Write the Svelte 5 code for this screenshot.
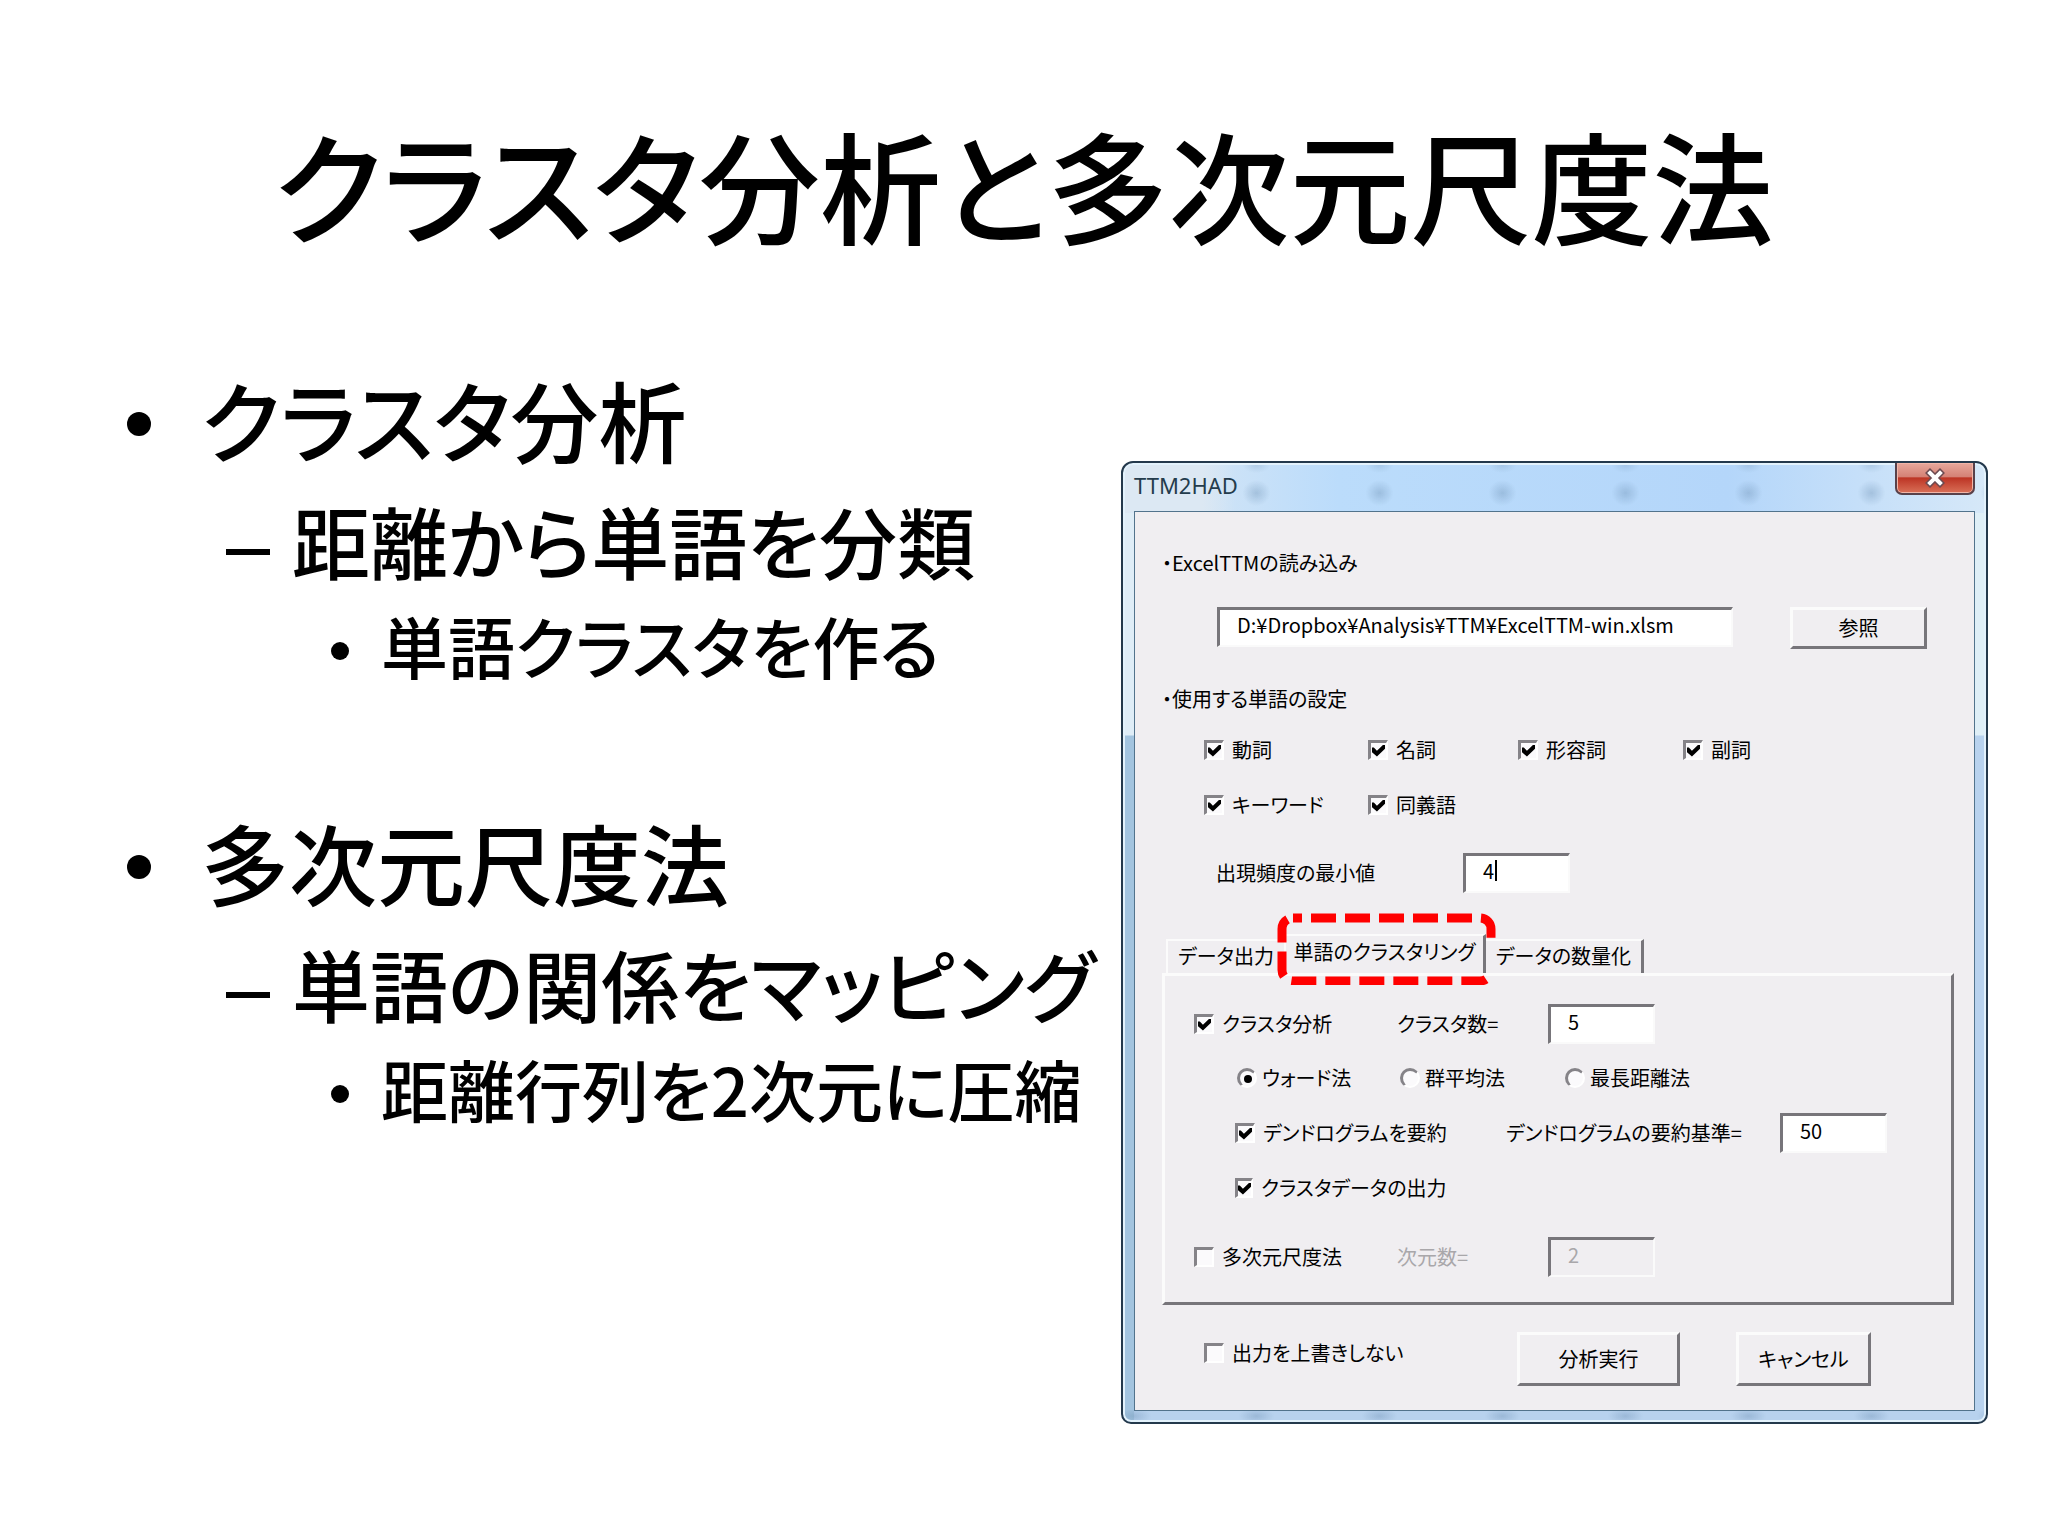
<script>
  const outline = [
    {
      title: 'クラスタ分析',
      child: '距離から単語を分類',
      detail: '単語クラスタを作る'
    },
    {
      title: '多次元尺度法',
      child: '単語の関係をマッピング',
      detail: '距離行列を2次元に圧縮'
    }
  ];

  const tabs = ['データ出力', '単語のクラスタリング', 'データの数量化'];
  const methods = ['ウォード法', '群平均法', '最長距離法'];

  let words = [
    { name: '動詞', checked: true },
    { name: '名詞', checked: true },
    { name: '形容詞', checked: true },
    { name: '副詞', checked: true },
    { name: 'キーワード', checked: true },
    { name: '同義語', checked: true }
  ];

  let path = 'D:¥Dropbox¥Analysis¥TTM¥ExcelTTM-win.xlsm';
  let minCount = '4';
  let activeTab = 1;
  let cluster = true;
  let clusterCount = '5';
  let method = 'ウォード法';
  let summarize = true;
  let threshold = '50';
  let outputData = true;
  let mds = false;
  let dimensions = '2';
  let keepOutput = false;
</script>

<main class="slide">
  <h1>クラスタ分析と多次元尺度法</h1>

  <div class="content">
    <ul class="outline">
      {#each outline as item}
        <li>
          <div class="line level1"><span class="dot"></span>{item.title}</div>
          <ul>
            <li>
              <div class="line level2"><span class="dash"></span>{item.child}</div>
              <ul>
                <li class="line level3"><span class="dot"></span>{item.detail}</li>
              </ul>
            </li>
          </ul>
        </li>
      {/each}
    </ul>

    <section class="dialog" aria-label="TTM2HAD">
      <header class="titlebar">
        <span>TTM2HAD</span>
        <button class="close" aria-label="閉じる">
          <svg width="22" height="20" viewBox="0 0 22 20" fill="none">
            <path d="M6 5l10 10M16 5L6 15" stroke="#6b4a50" stroke-width="7" stroke-linecap="square" />
            <path d="M6 5l10 10M16 5L6 15" stroke="#fff" stroke-width="4" stroke-linecap="square" />
          </svg>
        </button>
      </header>

      <form class="client" on:submit|preventDefault>
        <label class="caption" for="path">・ExcelTTMの読み込み</label>
        <div class="path-row">
          <input id="path" class="field" type="text" bind:value={path} />
          <button class="btn" type="button">参照</button>
        </div>

        <div class="caption second">・使用する単語の設定</div>
        <div class="words">
          {#each words as word}
            <label class="option"><input type="checkbox" bind:checked={word.checked} />{word.name}</label>
          {/each}
        </div>

        <div class="min-row">
          <label for="min">出現頻度の最小値</label>
          <div class="caret-field">
            <input id="min" class="field" type="text" bind:value={minCount} />
            <span class="caret"></span>
          </div>
        </div>

        <div class="tabs" role="tablist">
          {#each tabs as tab, i}
            <button
              class="tab"
              class:active={activeTab === i}
              type="button"
              role="tab"
              aria-selected={activeTab === i}
              on:click={() => (activeTab = i)}
            >
              {tab}
              {#if i === 1}
                <svg class="marker" viewBox="0 0 220 72">
                  <rect x="5" y="5" width="209" height="63" rx="11" fill="none" stroke="#f00" stroke-width="9" stroke-dasharray="25 9" stroke-dashoffset="16" />
                </svg>
              {/if}
            </button>
          {/each}
        </div>

        <div class="panel">
          <div class="row">
            <label class="option"><input type="checkbox" bind:checked={cluster} />クラスタ分析</label>
            <label for="count">クラスタ数=</label>
            <input id="count" class="field" type="text" bind:value={clusterCount} />
          </div>
          <div class="methods">
            {#each methods as name}
              <label class="option"><input type="radio" name="method" value={name} bind:group={method} />{name}</label>
            {/each}
          </div>
          <div class="row summary">
            <label class="option"><input type="checkbox" bind:checked={summarize} />デンドログラムを要約</label>
            <label for="threshold">デンドログラムの要約基準=</label>
            <input id="threshold" class="field" type="text" bind:value={threshold} />
          </div>
          <div class="row nested">
            <label class="option"><input type="checkbox" bind:checked={outputData} />クラスタデータの出力</label>
          </div>
          <div class="row">
            <label class="option"><input type="checkbox" bind:checked={mds} />多次元尺度法</label>
            <label class="off" for="dims">次元数=</label>
            <input id="dims" class="field" type="text" disabled={!mds} bind:value={dimensions} />
          </div>
        </div>

        <footer class="actions">
          <label class="option"><input type="checkbox" bind:checked={keepOutput} />出力を上書きしない</label>
          <button class="btn" type="submit">分析実行</button>
          <button class="btn" type="button">キャンセル</button>
        </footer>
      </form>
    </section>
  </div>
</main>

<style>
  :global(body) {
    margin: 0;
    background: #fff;
    color: #000;
    font-family: 'Noto Sans CJK JP', sans-serif;
    font-feature-settings: 'palt';
  }

  .slide {
    padding: 108px 60px 0 127px;
  }

  h1 {
    margin: 0 68px 93px 0;
    font-size: 121px;
    line-height: 150px;
    font-weight: 500;
    text-align: center;
  }

  .content {
    display: grid;
    grid-template-columns: minmax(0, 1fr) 867px;
    align-items: start;
  }

  ul {
    margin: 0;
    padding: 0;
    list-style: none;
  }

  .outline > li + li {
    margin-top: 99px;
  }

  .line {
    display: flex;
    align-items: center;
    font-weight: 500;
    white-space: nowrap;
  }

  .level1 {
    font-size: 88px;
    line-height: 134px;
  }

  .level2 {
    padding-left: 99px;
    font-size: 78px;
    line-height: 110px;
  }

  .level3 {
    padding-left: 204px;
    font-size: 67px;
    line-height: 100px;
  }

  .dot {
    width: 24px;
    height: 24px;
    margin-top: 12px;
    margin-right: 50px;
    border-radius: 50%;
    background: #000;
  }

  .level3 .dot {
    width: 18px;
    height: 18px;
    margin-right: 32px;
  }

  .dash {
    width: 44px;
    height: 6px;
    margin-top: 24px;
    margin-right: 22px;
    background: #000;
  }

  .dialog {
    margin-top: 110px;
    box-sizing: border-box;
    padding: 0 11px 11px;
    border: 2px solid #24394c;
    border-radius: 12px 12px 10px 10px;
    background:
      linear-gradient(90deg, #dce8f3 70%, #dce8f300) 2px 2px / 110px 46px no-repeat,
      radial-gradient(ellipse 14px 13px at 50% 50%, #6f92b566, #7d9cbc00) -51px 16px / 123px 28px repeat-x,
      radial-gradient(ellipse 14px 8px at 50% 0, #6f92b544, #7d9cbc00) -51px 2px / 123px 10px repeat-x,
      radial-gradient(ellipse 18px 8px at 50% 50%, #6f92b566, #7d9cbc00) -51px 100% / 123px 12px repeat-x,
      linear-gradient(90deg, #dce8f3, #bbdcfb 25%, #b4d6fa 70%, #d6e8f8) 0 0 / 100% 50px no-repeat,
      linear-gradient(#dfedf7 0 272px, #a3c4df 273px) 0 0 / 11px 100% no-repeat,
      linear-gradient(#dfeff7 0 272px, #b8d2ee 273px);
    box-shadow: inset 0 0 0 2px #e3f2fc;
    font-size: 20px;
    line-height: 30px;
  }

  .titlebar {
    display: flex;
    justify-content: space-between;
    height: 48px;
    color: #243c4c;
    font-family: 'Noto Sans', sans-serif;
    font-size: 22px;
    line-height: 44px;
  }

  .close {
    width: 80px;
    height: 32px;
    padding: 0;
    display: grid;
    place-items: center;
    border: 2px solid #58414a;
    border-top: 0;
    border-radius: 0 0 7px 7px;
    background: linear-gradient(#e7a89c, #d58276 45%, #bd3525 50%, #d97058);
    box-shadow: inset 0 0 0 1px #f0b5a8;
  }

  .client {
    padding: 36px 20px 24px 27px;
    border: 1px solid #52738c;
    background: #f0eef1;
  }

  .client button,
  .field {
    font: inherit;
    font-feature-settings: inherit;
    color: #000;
  }

  label {
    white-space: nowrap;
  }

  .caption {
    display: block;
  }

  .second {
    margin-top: 35px;
  }

  .path-row {
    display: grid;
    grid-template-columns: 516px 137px;
    justify-content: space-between;
    margin: 29px 27px 0 55px;
  }

  .field {
    box-sizing: border-box;
    width: 100%;
    height: 40px;
    padding: 0 0 7px 17px;
    border: 2px solid #fafafa;
    border-top: 3px solid #77757a;
    border-left: 3px solid #77757a;
    border-radius: 0;
    outline: 0;
    background: #fff;
  }

  .client .field:disabled {
    background: #f0eef1;
    color: #a9a7aa;
  }

  .off {
    color: #a9a7aa;
  }

  .btn {
    height: 42px;
    padding: 0;
    border: 3px solid #77757a;
    border-top-color: #fbfbfb;
    border-left-color: #fbfbfb;
    background: #f0eef1;
  }

  .words {
    display: grid;
    grid-template-columns: 164px 150px 165px 1fr;
    row-gap: 25px;
    margin: 21px 0 0 42px;
  }

  .option {
    display: flex;
    align-items: center;
    gap: 8px;
  }

  .option input {
    appearance: none;
    box-sizing: border-box;
    width: 20px;
    height: 20px;
    margin: 0;
    display: grid;
    place-items: center;
    border: 2px solid #fff;
    border-top: 3px solid #858388;
    border-left: 3px solid #858388;
    background: #fbfafc;
  }

  .option input[type='checkbox']:checked::before {
    content: '';
    width: 13px;
    height: 12px;
    background: #000;
    clip-path: polygon(0 26%, 14% 26%, 38% 52%, 88% 0, 100% 0, 100% 36%, 38% 100%, 0 64%);
  }

  .option input[type='radio'] {
    border-radius: 50%;
  }

  .option input[type='radio']:checked::before {
    content: '';
    width: 8px;
    height: 8px;
    border-radius: 50%;
    background: #000;
  }

  .min-row {
    display: grid;
    grid-template-columns: 247px 107px;
    align-items: center;
    margin: 33px 0 0 54px;
  }

  .caret-field {
    position: relative;
  }

  .caret {
    position: absolute;
    top: 7px;
    left: 32px;
    width: 2px;
    height: 21px;
    background: #000;
  }

  .tabs {
    display: flex;
    align-items: flex-end;
    height: 39px;
    margin: 41px 0 0 4px;
  }

  .tab {
    position: relative;
    box-sizing: border-box;
    width: 118px;
    height: 34px;
    padding: 0 0 3px;
    border: 0;
    border-top: 2px solid #fbfbfb;
    background: #f0eef1;
    white-space: nowrap;
  }

  .tab:first-child {
    border-left: 2px solid #fbfbfb;
  }

  .tab:last-child {
    width: 158px;
    border-right: 3px solid #77757a;
  }

  .tab.active {
    width: 202px;
    height: 39px;
    padding-bottom: 6px;
    border-right: 3px solid #77757a;
    border-left: 2px solid #fbfbfb;
  }

  .marker {
    position: absolute;
    top: -23px;
    left: -9px;
    width: 220px;
    height: 72px;
  }

  .panel {
    padding: 28px 0 25px 29px;
    border: 3px solid #77757a;
    border-top-color: #fbfbfb;
    border-left-color: #fbfbfb;
  }

  .row {
    display: grid;
    grid-template-columns: 203px 151px 107px;
    align-items: center;
  }

  .methods {
    display: grid;
    grid-template-columns: 163px 165px 1fr;
    margin: 19px 0 20px 43px;
  }

  .methods .option {
    gap: 5px;
  }

  .summary {
    grid-template-columns: 271px 274px 107px;
    margin-left: 41px;
  }

  .nested {
    margin: 20px 0 34px 41px;
  }

  .actions {
    display: grid;
    grid-template-columns: 313px 163px 135px;
    margin: 27px 0 0 42px;
  }

  .actions .btn {
    height: 54px;
  }

  .actions .btn:last-child {
    margin-left: 56px;
    width: 135px;
  }

  .actions .option {
    align-self: start;
    margin-top: 6px;
  }
</style>
